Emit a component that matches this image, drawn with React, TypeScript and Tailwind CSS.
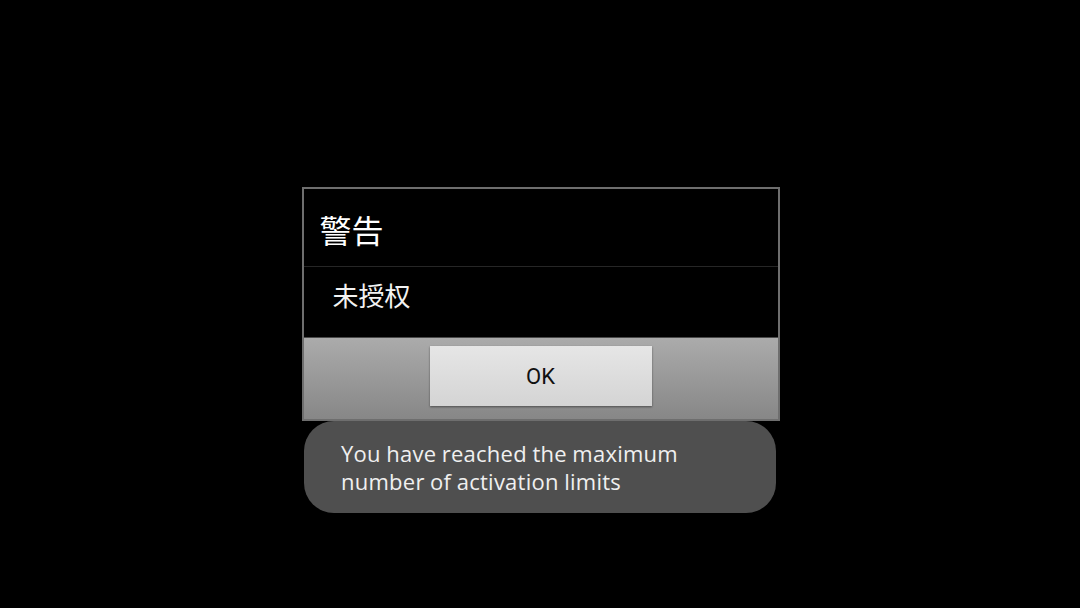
import React from 'react';

export default function App() {
  return (
    <div className="relative flex h-[608px] w-full items-center justify-center overflow-hidden bg-black">
      {/* alert dialog */}
      <div className="ml-[1px] flex w-[478px] flex-col border-2 border-[#6e6e6e] bg-black">
        <div className="flex h-[77px] items-center pl-[16px] pt-[2px] text-[32px] leading-none text-white [font-family:'Noto_Sans_CJK_SC',sans-serif]">
          警告
        </div>
        <div className="h-px bg-[#262626]" />
        <div className="flex h-[70px] items-center pl-[29px] pb-[14px] text-[26px] leading-none text-[#f2f2f2] [font-family:'Noto_Sans_CJK_SC',sans-serif]">
          未授权
        </div>
        <div className="h-px bg-[#4a4a4a]" />
        <div className="flex h-[81px] items-start justify-center bg-gradient-to-b from-[#ababab] to-[#878787] pt-[8px]">
          <button className="flex h-[60px] w-[222px] items-center justify-center bg-gradient-to-b from-[#e6e6e6] to-[#d4d4d4] pt-[1px] text-[22px] text-[#111] shadow-[0_1px_2px_rgba(0,0,0,0.45)] [font-family:Roboto,sans-serif]">
            OK
          </button>
        </div>
      </div>

      {/* toast */}
      <div className="absolute left-[304px] top-[421px] h-[92px] w-[472px] rounded-[30px] bg-[#4f4f4f] pl-[37px] pt-[18px] text-[22px] leading-[28px] tracking-[0.25px] [word-spacing:-0.5px] text-[#f0f0f0] [font-family:'Open_Sans',sans-serif]">
        You have reached the maximum
        <br />
        number of activation limits
      </div>
    </div>
  );
}
